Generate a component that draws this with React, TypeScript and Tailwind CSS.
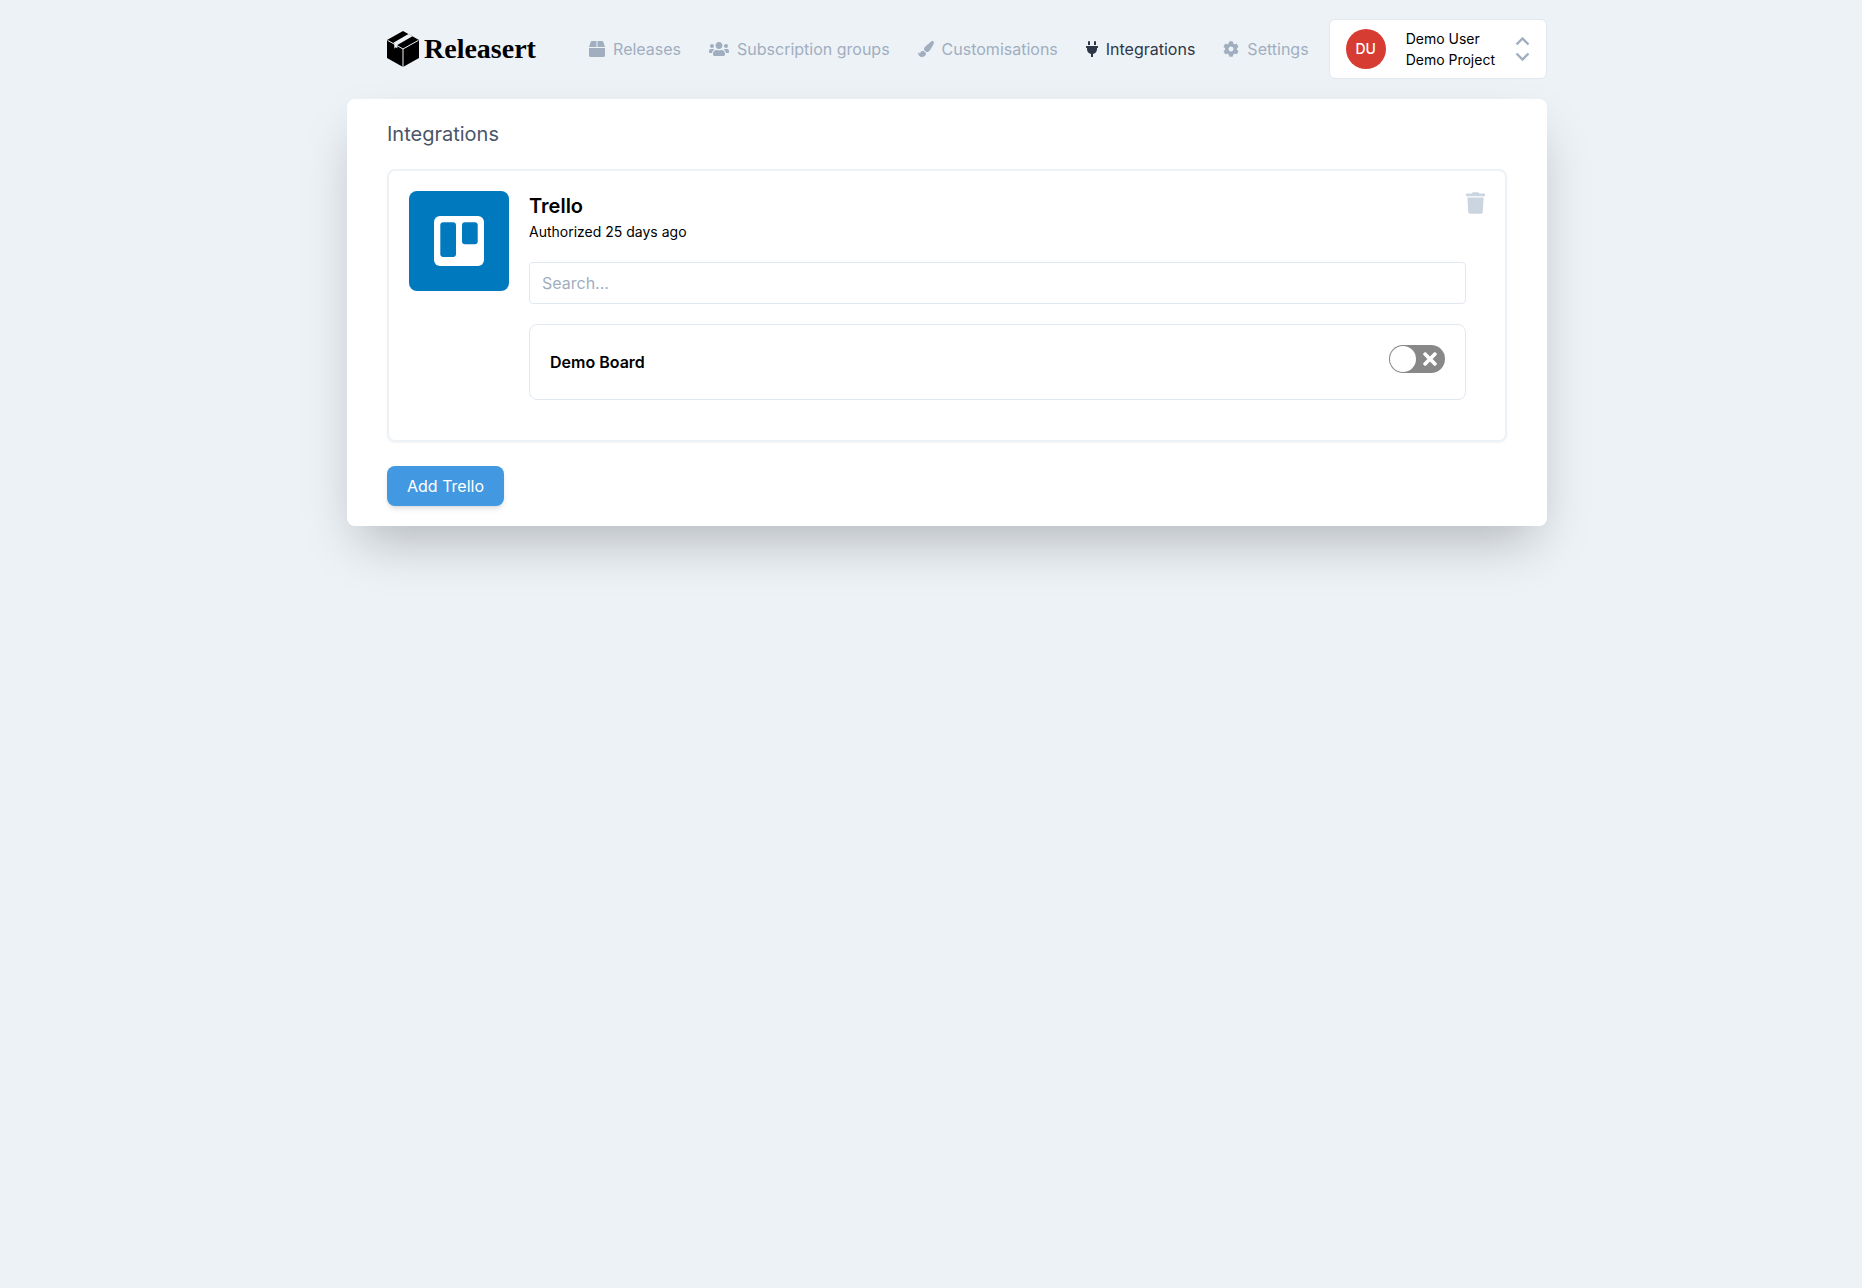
import { useState } from 'react';
import { FaBox, FaUsers, FaPaintBrush, FaPlug, FaCog, FaTrash, FaTimes } from 'react-icons/fa';

const navItems = [
  { label: 'Releases', icon: FaBox, iconSize: 'h-4 w-4', active: false },
  { label: 'Subscription groups', icon: FaUsers, iconSize: 'h-4 w-5', active: false },
  { label: 'Customisations', icon: FaPaintBrush, iconSize: 'h-4 w-4', active: false },
  { label: 'Integrations', icon: FaPlug, iconSize: 'h-4 w-3', active: true },
  { label: 'Settings', icon: FaCog, iconSize: 'h-4 w-4', active: false },
];

const boards = [{ id: 'demo-board', name: 'Demo Board' }];

function Logo() {
  return (
    <a href="#" className="flex items-center gap-[5px] text-black">
      <svg className="h-9 w-8" viewBox="0 0 32 36" aria-hidden="true">
        <path d="M16 0 32 9v18L16 36 0 27V9z" fill="#000" />
        <path d="M.5 9.300 16 18 31.500 9.300M16 18v18" fill="none" stroke="#edf2f7" strokeWidth="1" />
        <path d="M21.500 3 25.500 5.200 10.300 14v3.200l-1.600-.9-1.400 1.500v-5.600L6.300 11.800z" fill="#edf2f7" />
      </svg>
      <span className="font-['Liberation_Serif',serif] text-[28px] leading-9 font-bold">Releasert</span>
    </a>
  );
}

function UserMenu() {
  return (
    <button
      type="button"
      className="flex h-[60px] items-center gap-5 rounded-md border border-[#e2e8f0] bg-white px-4 text-left text-sm text-black"
    >
      <span className="flex h-10 w-10 items-center justify-center rounded-full bg-[#d73c32] font-medium text-white">
        DU
      </span>
      <span className="leading-[21px]">
        <span className="block">Demo User</span>
        <span className="block">Demo Project</span>
      </span>
      <svg className="h-6 w-[15px]" viewBox="0 0 15 24" fill="none" stroke="#a0aec0" strokeWidth="2.4" aria-hidden="true">
        <path d="M1.500 7.500l6-6 6 6M1.500 16.500l6 6 6-6" />
      </svg>
    </button>
  );
}

function Board({ id, name }: { id: string; name: string }) {
  const [enabled, setEnabled] = useState(false);

  return (
    <label
      htmlFor={id}
      className="flex cursor-pointer items-start justify-between rounded-lg border border-[#e2e8f0] p-5"
    >
      <span className="leading-[34px] font-semibold">{name}</span>
      <input
        id={id}
        type="checkbox"
        className="peer sr-only"
        checked={enabled}
        onChange={(e) => setEnabled(e.target.checked)}
      />
      <span className="flex h-7 w-14 items-center justify-between rounded-full bg-[#888888] py-px pr-2 pl-px peer-checked:flex-row-reverse peer-checked:bg-[#4299e1] peer-checked:pr-px peer-checked:pl-2">
        <span className="h-[26px] w-[26px] rounded-full bg-white" />
        <FaTimes className="h-5 w-[14px] text-white" />
      </span>
    </label>
  );
}

function TrelloCard() {
  return (
    <section className="flex rounded-lg border-2 border-[#edf2f7] p-5 shadow-xs">
      <svg className="h-[100px] w-[100px] shrink-0" viewBox="0 0 100 100" aria-hidden="true">
        <rect width="100" height="100" rx="8" fill="#0079bf" />
        <rect x="25" y="25" width="50" height="50" rx="6" fill="#fff" />
        <rect x="31.300" y="31.300" width="15.700" height="34.700" rx="3" fill="#0079bf" />
        <rect x="53" y="31.300" width="15.700" height="22" rx="3" fill="#0079bf" />
      </svg>
      <div className="ml-5 flex-1">
        <h2 className="text-xl leading-[30px] font-semibold">Trello</h2>
        <p className="text-sm leading-[21px]">Authorized 25 days ago</p>
        <input
          type="text"
          aria-label="Search boards"
          placeholder="Search..."
          className="mt-5 block h-[42px] w-full rounded border border-[#e2e8f0] px-3 placeholder:text-[#a0aec0]"
        />
        <div className="my-5">
          {boards.map((board) => (
            <Board key={board.id} {...board} />
          ))}
        </div>
      </div>
      <button type="button" aria-label="Remove Trello" className="self-start text-[#cbd5e0]">
        <FaTrash className="h-6 w-[19px]" />
      </button>
    </section>
  );
}

export default function App() {
  return (
    <div className="min-h-screen bg-[#edf2f7] pl-8 font-['Inter',sans-serif] text-base text-black">
      <div className="mx-auto max-w-[1200px]">
        <header className="flex items-center justify-between pt-[19px] pb-5 pl-10">
          <Logo />
          <div className="flex items-center gap-5">
            <nav className="flex items-center gap-7">
              {navItems.map((item) => (
                <a
                  key={item.label}
                  href="#"
                  className={`flex items-center gap-2 ${item.active ? 'text-[#2d3748]' : 'text-[#a0aec0]'}`}
                >
                  <item.icon className={item.iconSize} />
                  {item.label}
                </a>
              ))}
            </nav>
            <UserMenu />
          </div>
        </header>

        <main className="rounded-lg bg-white px-10 py-5 shadow-2xl">
          <h1 className="mb-5 text-xl leading-[30px] text-[#4a5568]">Integrations</h1>
          <TrelloCard />
          <button
            type="button"
            className="mt-6 h-10 rounded-lg bg-[#4299e1] px-5 text-white shadow-md"
          >
            Add Trello
          </button>
        </main>
      </div>
    </div>
  );
}
